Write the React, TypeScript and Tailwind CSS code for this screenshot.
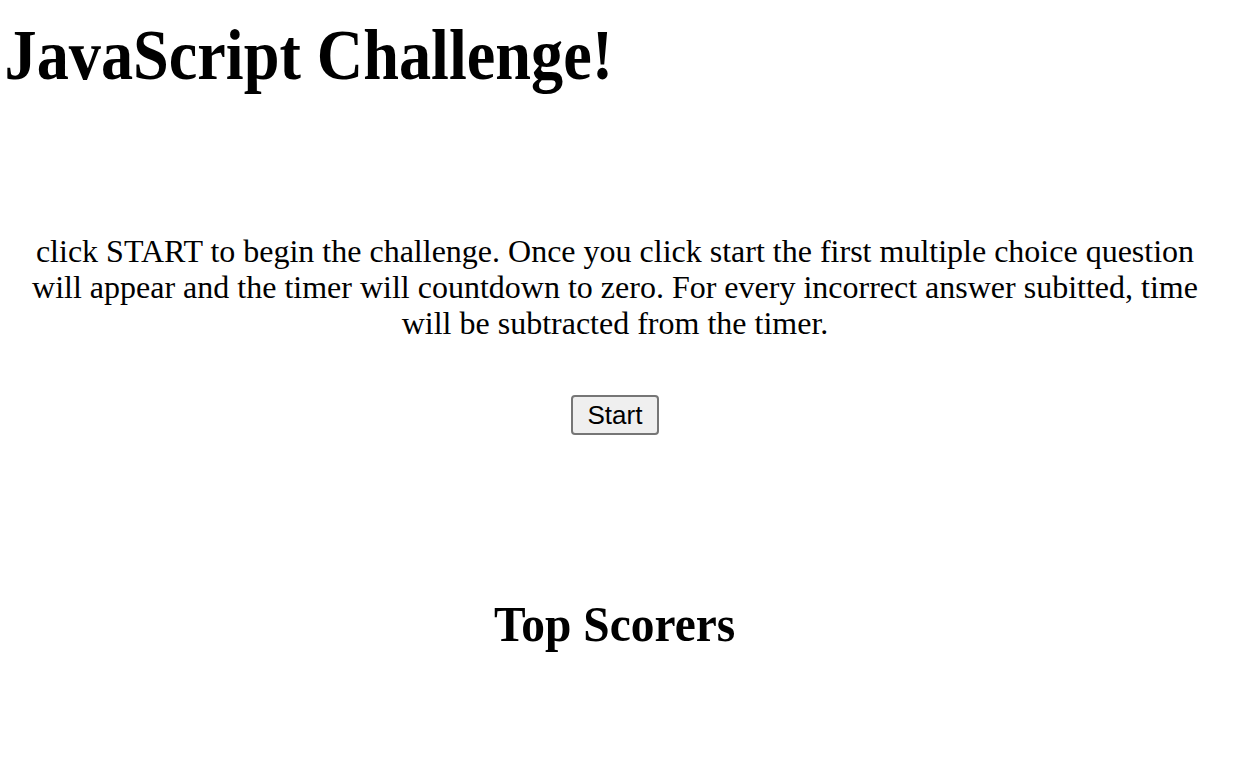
export default function App() {
  return (
    <div className="min-h-[766px] bg-white text-black font-['Liberation_Serif',serif]">
      <h1 className="mt-[20px] pl-[5px] text-[71px] leading-[70px] font-bold origin-left scale-x-[0.905]">
        JavaScript Challenge!
      </h1>

      <main className="pl-[20px] pr-[30px] flex flex-col items-center">
        <p className="mt-[143px] text-center text-[32px] leading-[36px]">
          click START to begin the challenge. Once you click start the first
          multiple choice question will appear and the timer will countdown to
          zero. For every incorrect answer subitted, time will be subtracted
          from the timer.
        </p>

        <button className="mt-[54px] h-[40px] px-[15px] rounded-[4px] border-2 border-[#767676] bg-[#efefef] font-['Liberation_Sans',Arial,sans-serif] text-[26px] leading-none">
          Start
        </button>

        <h2 className="mt-[164px] text-[51px] leading-[50px] font-bold scale-x-[0.93]">
          Top Scorers
        </h2>
      </main>
    </div>
  );
}
